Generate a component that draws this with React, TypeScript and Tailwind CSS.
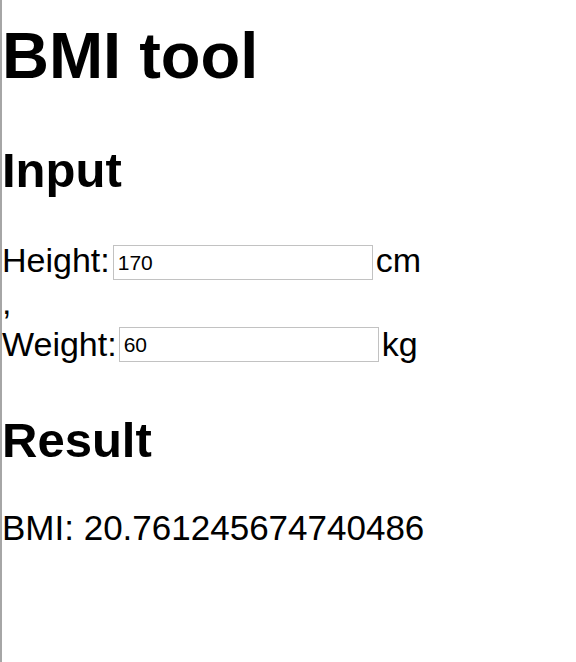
import { useState } from "react";

export default function App() {
    const [height, setHeight] = useState("170");
    const [weight, setWeight] = useState("60");

    const h = Number(height) / 100;
    const bmi = Number(weight) / (h * h);

    return (
        <div className="min-h-screen border-l-2 border-[#a6a6a6] bg-white text-black font-['Liberation_Sans',Arial,sans-serif]">
            <h1 className="pt-[24px] text-[65px] leading-[64px] font-bold">BMI tool</h1>

            <h2 className="mt-[58px] text-[49px] leading-[48px] font-bold">Input</h2>

            <div className="mt-[46px] flex items-start h-[40px] text-[34px] leading-[40px]">
                <span>Height:</span>
                <input
                    className="mt-[5px] ml-[3px] mr-[3px] w-[260px] h-[35px] border border-[#c2c2c2] px-[4px] text-[21px] outline-none"
                    value={height}
                    onChange={(e) => setHeight(e.target.value)}
                />
                <span>cm</span>
            </div>
            <div className="text-[34px] leading-[44px]">,</div>
            <div className="flex items-start h-[40px] text-[34px] leading-[40px]">
                <span>Weight:</span>
                <input
                    className="mt-[3px] ml-[2px] mr-[3px] w-[260px] h-[35px] border border-[#c2c2c2] px-[4px] text-[21px] outline-none"
                    value={weight}
                    onChange={(e) => setWeight(e.target.value)}
                />
                <span>kg</span>
            </div>

            <h2 className="mt-[52px] text-[49px] leading-[48px] font-bold">Result</h2>

            <p className="mt-[44px] text-[35px] leading-[40px]">BMI: {bmi}</p>
        </div>
    );
}
